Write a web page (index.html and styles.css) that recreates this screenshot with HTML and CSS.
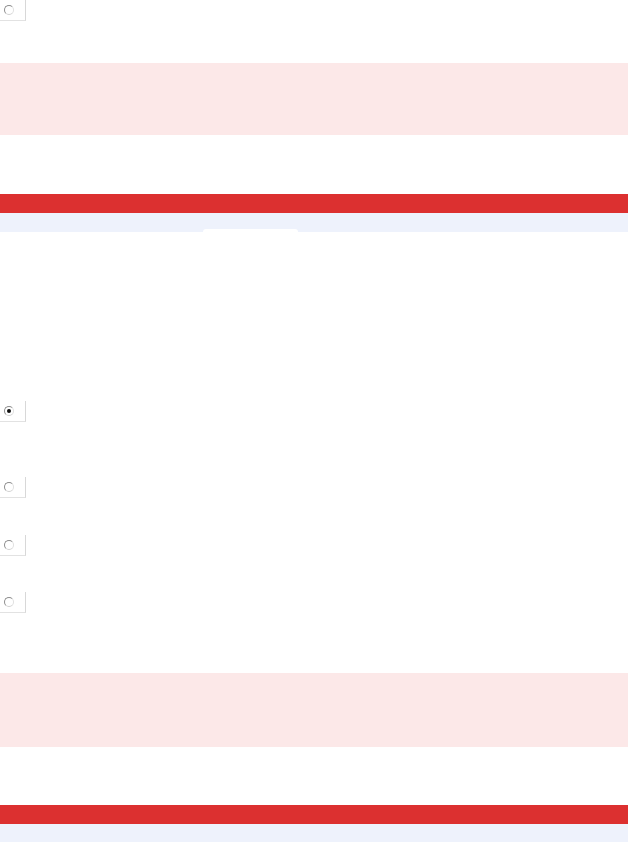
FILE: index.html
```html
<!DOCTYPE html>
<html lang="en">
<head>
  <meta charset="UTF-8">
  <meta name="viewport" content="width=device-width, initial-scale=1.0">
  <title>Form</title>
  <link rel="stylesheet" href="styles.css">
</head>
<body>
  <div class="choice first"><span class="radio"></span></div>

  <div class="alert"></div>

  <div class="bar"></div>
  <div class="tabs"><span class="tab active"></span></div>

  <div class="choice c1"><span class="radio checked"></span></div>
  <div class="choice c2"><span class="radio"></span></div>
  <div class="choice c3"><span class="radio"></span></div>
  <div class="choice c4"><span class="radio"></span></div>

  <div class="alert second"></div>

  <div class="bar second"></div>
  <div class="tabs"></div>
</body>
</html>
```

FILE: styles.css
```css
body {
  margin: 0;
  font-family: "Liberation Sans", Arial, sans-serif;
  background: #fff;
}
.choice {
  width: 26px;
  height: 21px;
  border-right: 1px solid #d8d8d8;
  border-bottom: 1px solid #e2e2e2;
  box-sizing: border-box;
  display: flex;
  align-items: center;
  padding-left: 4px;
}
.c1 { margin-top: 169px; }
.c2 { margin-top: 55px; }
.c3 { margin-top: 37px; }
.c4 { margin-top: 36px; }
.radio {
  width: 10px;
  height: 10px;
  box-sizing: border-box;
  border-radius: 50%;
  border: 1px solid #8c8c8c;
  border-right-color: #e0e0e0;
  border-bottom-color: #d0d0d0;
  background: #fff;
  display: flex;
  align-items: center;
  justify-content: center;
}
.radio.checked::after {
  content: "";
  width: 4px;
  height: 4px;
  border-radius: 50%;
  background: #111;
}
.alert {
  margin-top: 42px;
  height: 72px;
  background: #fce8e8;
}
.alert.second {
  margin-top: 60px;
  height: 74px;
}
.bar {
  margin-top: 59px;
  height: 19px;
  background: #dc3030;
}
.bar.second {
  margin-top: 58px;
}
.tabs {
  height: 19px;
  background: #eef2fc;
  display: flex;
  align-items: flex-end;
  padding-left: 203px;
}
.tab.active {
  width: 95px;
  height: 3px;
  background: #fff;
  border-radius: 3px 3px 0 0;
}
```
